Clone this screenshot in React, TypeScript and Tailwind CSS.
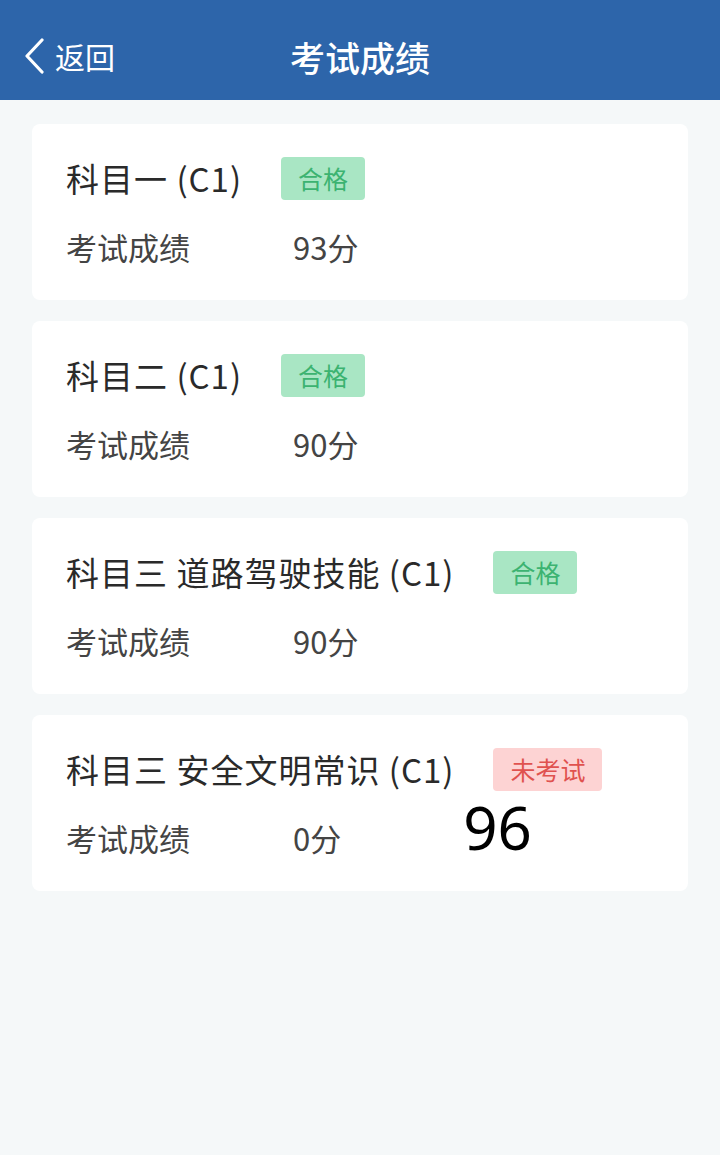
import React from "react";

const font = { fontFamily: '"Noto Sans CJK SC", "Noto Sans", sans-serif' };

type Item = { title: string; badge: string; pass: boolean; score: string; extra?: string };

const items: Item[] = [
  { title: "科目一 (C1)", badge: "合格", pass: true, score: "93分" },
  { title: "科目二 (C1)", badge: "合格", pass: true, score: "90分" },
  { title: "科目三 道路驾驶技能 (C1)", badge: "合格", pass: true, score: "90分" },
  { title: "科目三 安全文明常识 (C1)", badge: "未考试", pass: false, score: "0分", extra: "96" },
];

export default function App() {
  return (
    <div className="w-[720px] h-[1155px] bg-[#f5f8f9] text-[#333333]" style={font}>
      <div className="h-[100px] bg-[#2d65aa] relative flex items-center justify-center">
        <div className="absolute left-[22px] top-[38px] flex items-center">
          <svg width="24" height="36" viewBox="0 0 24 36" fill="none">
            <path d="M20 2 L5 18 L20 34" stroke="white" strokeWidth="3.2" strokeLinecap="round" strokeLinejoin="round" />
          </svg>
          <span className="ml-[9px] text-[30px] leading-[36px] text-white">返回</span>
        </div>
        <span className="text-[35px] leading-[40px] text-white font-medium mt-[14px]">考试成绩</span>
      </div>
      <div className="px-[32px] pt-[24px] flex flex-col gap-[21px]">
        {items.map((it, i) => (
          <div key={i} className="bg-white rounded-[8px] h-[176px] pl-[34px] pt-[33px]">
            <div className="flex items-center h-[43px]">
              <span className="text-[33px] leading-[43px] tracking-[1px] text-[#2a2a2a]">{it.title}</span>
              <span
                className={
                  "ml-[39px] h-[43px] px-[17px] rounded-[4px] text-[25px] leading-[43px] " +
                  (it.pass ? "bg-[#a9e6c4] text-[#3cb371]" : "bg-[#fdd3d3] text-[#e0524f]")
                }
              >
                {it.badge}
              </span>
            </div>
            <div className="flex items-center mt-[27px] h-[40px]">
              <span className="w-[227px] text-[31px] leading-[40px] text-[#444444]">考试成绩</span>
              <span className="text-[31px] leading-[40px] text-[#444444]">{it.score}</span>
              {it.extra && (
                <span
                  className="ml-[122px] -mt-[22px] text-[60px] leading-[64px] text-black"
                  style={{ fontFamily: '"Noto Sans", Roboto, sans-serif' }}
                >
                  {it.extra}
                </span>
              )}
            </div>
          </div>
        ))}
      </div>
    </div>
  );
}
